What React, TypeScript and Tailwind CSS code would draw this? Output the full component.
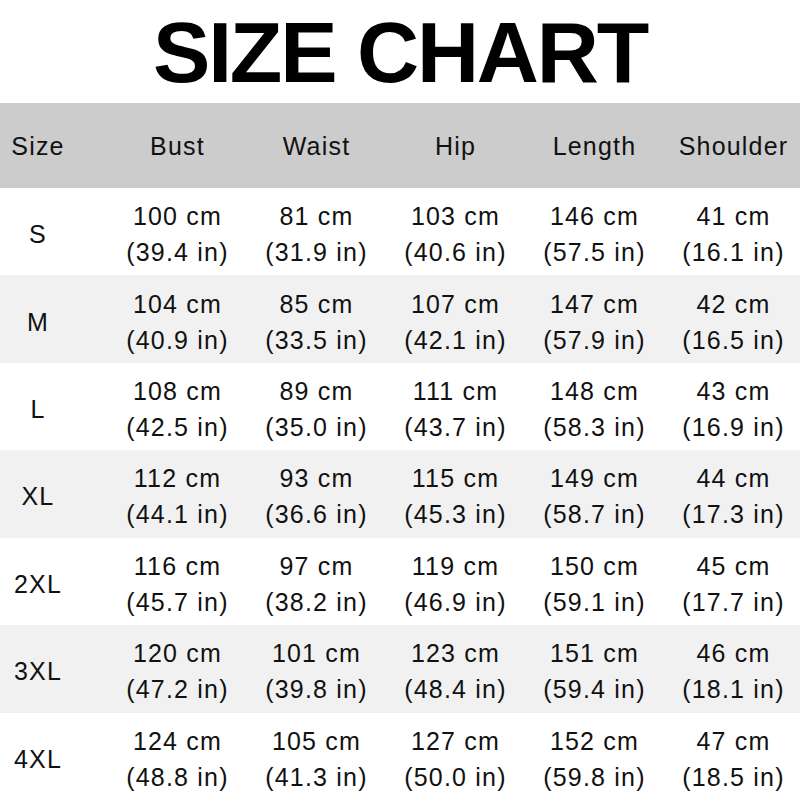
import React from "react";

const headers = ["Bust", "Waist", "Hip", "Length", "Shoulder"];

const rows: { size: string; cells: [string, string][] }[] = [
  { size: "S", cells: [["100 cm", "(39.4 in)"], ["81 cm", "(31.9 in)"], ["103 cm", "(40.6 in)"], ["146 cm", "(57.5 in)"], ["41 cm", "(16.1 in)"]] },
  { size: "M", cells: [["104 cm", "(40.9 in)"], ["85 cm", "(33.5 in)"], ["107 cm", "(42.1 in)"], ["147 cm", "(57.9 in)"], ["42 cm", "(16.5 in)"]] },
  { size: "L", cells: [["108 cm", "(42.5 in)"], ["89 cm", "(35.0 in)"], ["111 cm", "(43.7 in)"], ["148 cm", "(58.3 in)"], ["43 cm", "(16.9 in)"]] },
  { size: "XL", cells: [["112 cm", "(44.1 in)"], ["93 cm", "(36.6 in)"], ["115 cm", "(45.3 in)"], ["149 cm", "(58.7 in)"], ["44 cm", "(17.3 in)"]] },
  { size: "2XL", cells: [["116 cm", "(45.7 in)"], ["97 cm", "(38.2 in)"], ["119 cm", "(46.9 in)"], ["150 cm", "(59.1 in)"], ["45 cm", "(17.7 in)"]] },
  { size: "3XL", cells: [["120 cm", "(47.2 in)"], ["101 cm", "(39.8 in)"], ["123 cm", "(48.4 in)"], ["151 cm", "(59.4 in)"], ["46 cm", "(18.1 in)"]] },
  { size: "4XL", cells: [["124 cm", "(48.8 in)"], ["105 cm", "(41.3 in)"], ["127 cm", "(50.0 in)"], ["152 cm", "(59.8 in)"], ["47 cm", "(18.5 in)"]] },
];

export default function App() {
  return (
    <div
      className="w-[800px] h-[800px] overflow-hidden bg-white text-[#111]"
      style={{ fontFamily: '"Liberation Sans", Arial, sans-serif' }}
    >
      <div className="h-[103px] flex items-center justify-center">
        <h1 className="text-[86px] leading-[86px] font-bold tracking-[-2.2px] text-black">SIZE CHART</h1>
      </div>
      <div className="h-[85px] bg-[#cccccc] grid grid-cols-[108px_repeat(5,139px)] items-center pt-[3px] text-[25px] tracking-[1.2px]">
        <div className="w-[76px] text-center">Size</div>
        {headers.map((h) => (
          <div key={h} className="text-center">{h}</div>
        ))}
      </div>
      {rows.map((r, i) => (
        <div
          key={r.size}
          className={`h-[87.43px] grid grid-cols-[108px_repeat(5,139px)] items-center pt-[5px] text-[25px] tracking-[1.2px] leading-[36px] ${i % 2 === 1 ? "bg-[#f1f1f1]" : "bg-white"}`}
        >
          <div className="w-[76px] text-center">{r.size}</div>
          {r.cells.map(([a, b], j) => (
            <div key={j} className="text-center">
              <div>{a}</div>
              <div>{b}</div>
            </div>
          ))}
        </div>
      ))}
    </div>
  );
}
